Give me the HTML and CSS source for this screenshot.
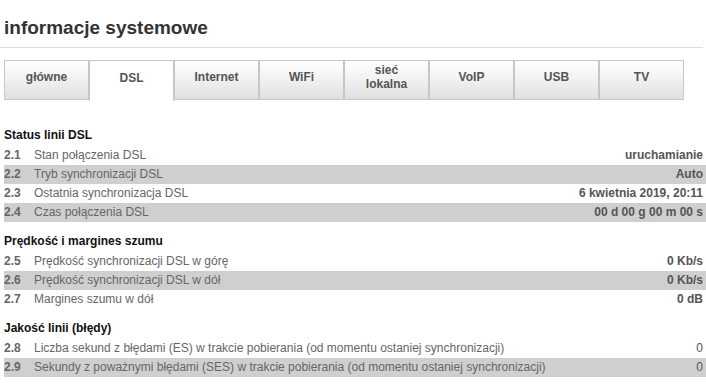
FILE: index.html
```html
<!DOCTYPE html>
<html lang="pl">
<head>
    <meta charset="UTF-8">
    <title>informacje systemowe</title>
    <link rel="stylesheet" href="styles.css">
</head>
<body>
    <h1 class="page-title">informacje systemowe</h1>

    <div class="tabs">
        <div class="tab">główne</div>
        <div class="tab active">DSL</div>
        <div class="tab">Internet</div>
        <div class="tab">WiFi</div>
        <div class="tab">sieć<br>lokalna</div>
        <div class="tab">VoIP</div>
        <div class="tab">USB</div>
        <div class="tab">TV</div>
    </div>

    <div class="section first">
        <div class="section-title">Status linii DSL</div>
        <div class="row"><span class="num">2.1</span><span class="label">Stan połączenia DSL</span><span class="value">uruchamianie</span></div>
        <div class="row alt"><span class="num">2.2</span><span class="label">Tryb synchronizacji DSL</span><span class="value">Auto</span></div>
        <div class="row"><span class="num">2.3</span><span class="label">Ostatnia synchronizacja DSL</span><span class="value">6 kwietnia 2019, 20:11</span></div>
        <div class="row alt"><span class="num">2.4</span><span class="label">Czas połączenia DSL</span><span class="value">00 d 00 g 00 m 00 s</span></div>
    </div>

    <div class="section">
        <div class="section-title">Prędkość i margines szumu</div>
        <div class="row"><span class="num">2.5</span><span class="label">Prędkość synchronizacji DSL w górę</span><span class="value">0 Kb/s</span></div>
        <div class="row alt"><span class="num">2.6</span><span class="label">Prędkość synchronizacji DSL w dół</span><span class="value">0 Kb/s</span></div>
        <div class="row"><span class="num">2.7</span><span class="label">Margines szumu w dół</span><span class="value">0 dB</span></div>
    </div>

    <div class="section">
        <div class="section-title">Jakość linii (błędy)</div>
        <div class="row"><span class="num">2.8</span><span class="label">Liczba sekund z błędami (ES) w trakcie pobierania (od momentu ostaniej synchronizacji)</span><span class="value plain">0</span></div>
        <div class="row alt"><span class="num">2.9</span><span class="label">Sekundy z poważnymi błędami (SES) w trakcie pobierania (od momentu ostaniej synchronizacji)</span><span class="value plain">0</span></div>
    </div>
</body>
</html>
```

FILE: styles.css
```css
body {
    margin: 0;
    background-color: #fff;
    font-family: "Liberation Sans", Arial, sans-serif;
    font-size: 12px;
    color: #666;
}

.page-title {
    margin: 0;
    width: 699px;
    padding: 16px 0 7px 4px;
    font-size: 19px;
    line-height: 24px;
    font-weight: bold;
    color: #333;
    border-bottom: 1px solid #ddd;
}

.tabs {
    display: flex;
    margin: 12px 0 0 4px;
}

.tab {
    box-sizing: border-box;
    width: 85px;
    height: 40px;
    padding-bottom: 6px;
    display: flex;
    align-items: center;
    justify-content: center;
    text-align: center;
    font-size: 12px;
    line-height: 14px;
    font-weight: bold;
    color: #555;
    border: 1px solid #c6c6c6;
    background: linear-gradient(#ffffff, #f2f2f2 45%, #e0e0e0);
}

.tab.active {
    height: 41px;
    background: #fff;
    border-bottom: none;
}

.section {
    margin: 8px 0 0 4px;
}

.section.first {
    margin-top: 23px;
}

.section-title {
    height: 22px;
    line-height: 22px;
    font-weight: bold;
    color: #111;
}

.row {
    display: flex;
    height: 19px;
    line-height: 19px;
}

.row.alt {
    background-color: #cfcfcf;
}

.num {
    width: 30px;
    font-weight: bold;
    color: #666;
}

.label {
    flex: 1;
    white-space: nowrap;
}

.value {
    padding-right: 3px;
    font-weight: bold;
    color: #555;
    white-space: nowrap;
}

.value.plain {
    font-weight: normal;
}
```
